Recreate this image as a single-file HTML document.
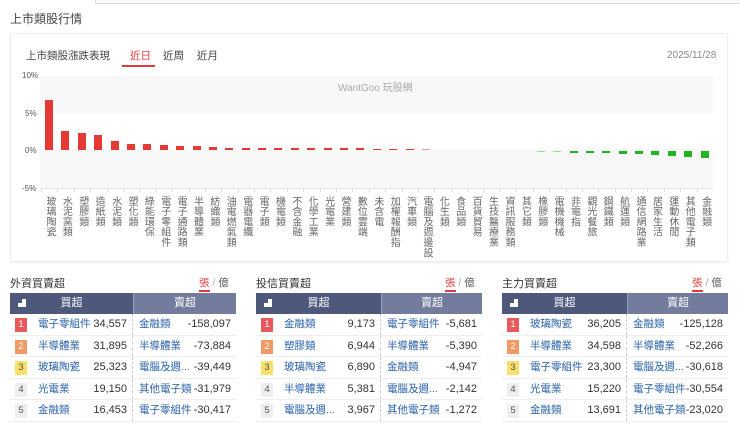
<!DOCTYPE html>
<html><head><meta charset="utf-8"><style>
*{margin:0;padding:0;box-sizing:border-box}
body{width:740px;height:425px;background:#fff;font-family:"Liberation Sans","Noto Sans CJK TC",sans-serif;color:#333;position:relative;overflow:hidden}
.a{position:absolute}
.cols{position:absolute;left:41px;top:0;display:flex}
.col{width:16.4px;position:relative;height:320px}
.bar{position:absolute;left:4px;width:8px}
.lbl{position:absolute;top:196px;left:2px;width:13px;writing-mode:vertical-rl;text-orientation:upright;font-size:10px;line-height:13px;color:#666;letter-spacing:0.3px;white-space:nowrap}
.tk{position:absolute;top:188px;left:0;width:1px;height:4px;background:#ddd}
.tbl{position:absolute;top:293px;width:226px}
.hd{height:21px;display:flex;color:#fff;font-size:11px}
.hd .l{background:#4e587b;width:123px;position:relative;text-align:center;line-height:21px}
.hd .r{background:#737c9c;flex:1;text-align:center;line-height:21px;border-left:1px solid #9aa2bc}
.row{height:21.6px;display:flex;font-size:10.5px;line-height:21.6px;border-bottom:1px solid #eee}
.row .l{width:123px;position:relative;border-right:1px dashed #ccc}
.row .r{flex:1;position:relative}
.bd{position:absolute;left:5px;top:4px;width:12px;height:14px;font-size:9.5px;line-height:14px;text-align:center;color:#fff}
.nm{position:absolute;color:#2a62a8;letter-spacing:0}
.l .nm{left:28px}.r .nm{left:6px}
.n{position:absolute;right:5px;color:#333;font-size:11px}
.ttl{position:absolute;top:275px;font-size:11px;color:#333}
.tog{position:absolute;top:275px;font-size:10.5px;color:#aaa}
.tog b{font-weight:normal;color:#e03c3c;border-bottom:2px solid #e03c3c;padding-bottom:1px}
</style></head><body>
<div class="a" style="left:95px;top:0;width:645px;height:4px;border-left:1px solid #ddd;border-bottom:1px solid #ddd;background:#fafafa"></div>
<div class="a" style="left:10px;top:10px;font-size:12px;color:#444">上市類股行情</div>
<div class="a" style="left:10px;top:33px;width:718px;height:229px;border:1px solid #eee;box-shadow:0 1px 2px #eee"></div>
<div class="a" style="left:26px;top:48px;font-size:10.5px;color:#444">上市類股漲跌表現</div>
<div class="a" style="left:130px;top:48px;font-size:10.5px;color:#e03c3c">近日</div>
<div class="a" style="left:122px;top:65px;width:33px;height:2px;background:#e03c3c"></div>
<div class="a" style="left:163px;top:48px;font-size:10.5px;color:#444">近周</div>
<div class="a" style="left:197px;top:48px;font-size:10.5px;color:#444">近月</div>
<div class="a" style="left:667px;top:50px;font-size:10px;color:#888">2025/11/28</div>
<div class="a" style="left:40px;top:76px;width:673px;height:37px;background:#f8f8f8"></div>
<div class="a" style="left:40px;top:150px;width:673px;height:38px;background:#f8f8f8"></div>
<div class="a" style="left:40px;top:188px;width:673px;height:1px;background:#e6e6e6"></div>
<div class="a" style="left:338px;top:79px;font-size:10px;color:#aaa">WantGoo 玩股網</div>
<div class="a" style="left:22px;top:71px;font-size:8px;color:#555">10%</div>
<div class="a" style="left:25px;top:109px;font-size:8px;color:#555">5%</div>
<div class="a" style="left:25px;top:146px;font-size:8px;color:#555">0%</div>
<div class="a" style="left:22px;top:184px;font-size:8px;color:#555">-5%</div>
<div class="cols">
<div class="col"><div class="bar" style="top:100px;height:50px;background:#e53935"></div><div class="tk"></div><div class="lbl">玻璃陶瓷</div></div>
<div class="col"><div class="bar" style="top:131px;height:19px;background:#e53935"></div><div class="tk"></div><div class="lbl">水泥窯類</div></div>
<div class="col"><div class="bar" style="top:133px;height:17px;background:#e53935"></div><div class="tk"></div><div class="lbl">塑膠類</div></div>
<div class="col"><div class="bar" style="top:135px;height:15px;background:#e53935"></div><div class="tk"></div><div class="lbl">造紙類</div></div>
<div class="col"><div class="bar" style="top:141px;height:9px;background:#e53935"></div><div class="tk"></div><div class="lbl">水泥類</div></div>
<div class="col"><div class="bar" style="top:144px;height:6px;background:#e53935"></div><div class="tk"></div><div class="lbl">塑化類</div></div>
<div class="col"><div class="bar" style="top:144px;height:6px;background:#e53935"></div><div class="tk"></div><div class="lbl">綠能環保</div></div>
<div class="col"><div class="bar" style="top:145px;height:5px;background:#e53935"></div><div class="tk"></div><div class="lbl">電子零組件</div></div>
<div class="col"><div class="bar" style="top:146px;height:4px;background:#e53935"></div><div class="tk"></div><div class="lbl">電子通路類</div></div>
<div class="col"><div class="bar" style="top:146px;height:4px;background:#e53935"></div><div class="tk"></div><div class="lbl">半導體業</div></div>
<div class="col"><div class="bar" style="top:147px;height:3px;background:#e53935"></div><div class="tk"></div><div class="lbl">紡織類</div></div>
<div class="col"><div class="bar" style="top:148px;height:2px;background:#e53935"></div><div class="tk"></div><div class="lbl">油電燃氣類</div></div>
<div class="col"><div class="bar" style="top:148px;height:2px;background:#e53935"></div><div class="tk"></div><div class="lbl">電器電纜</div></div>
<div class="col"><div class="bar" style="top:148px;height:2px;background:#e53935"></div><div class="tk"></div><div class="lbl">電子類</div></div>
<div class="col"><div class="bar" style="top:148px;height:2px;background:#e53935"></div><div class="tk"></div><div class="lbl">機電類</div></div>
<div class="col"><div class="bar" style="top:148px;height:2px;background:#e53935"></div><div class="tk"></div><div class="lbl">不含金融</div></div>
<div class="col"><div class="bar" style="top:148px;height:2px;background:#e53935"></div><div class="tk"></div><div class="lbl">化學工業</div></div>
<div class="col"><div class="bar" style="top:148px;height:2px;background:#e53935"></div><div class="tk"></div><div class="lbl">光電業</div></div>
<div class="col"><div class="bar" style="top:148px;height:2px;background:#e53935"></div><div class="tk"></div><div class="lbl">營建類</div></div>
<div class="col"><div class="bar" style="top:148px;height:2px;background:#e53935"></div><div class="tk"></div><div class="lbl">數位雲端</div></div>
<div class="col"><div class="bar" style="top:148.5px;height:1.5px;background:#e53935"></div><div class="tk"></div><div class="lbl">未含電</div></div>
<div class="col"><div class="bar" style="top:148.5px;height:1.5px;background:#e53935"></div><div class="tk"></div><div class="lbl">加權報酬指</div></div>
<div class="col"><div class="bar" style="top:149px;height:1px;background:#e53935"></div><div class="tk"></div><div class="lbl">汽車類</div></div>
<div class="col"><div class="bar" style="top:149px;height:1px;background:#f0a0a8"></div><div class="tk"></div><div class="lbl">電腦及週邊設</div></div>
<div class="col"><div class="tk"></div><div class="lbl">化生類</div></div>
<div class="col"><div class="tk"></div><div class="lbl">食品類</div></div>
<div class="col"><div class="tk"></div><div class="lbl">百貨貿易</div></div>
<div class="col"><div class="tk"></div><div class="lbl">生技醫療業</div></div>
<div class="col"><div class="tk"></div><div class="lbl">資訊服務類</div></div>
<div class="col"><div class="tk"></div><div class="lbl">其它類</div></div>
<div class="col"><div class="bar" style="top:151px;height:1px;background:#9ddc9d"></div><div class="tk"></div><div class="lbl">橡膠類</div></div>
<div class="col"><div class="bar" style="top:151px;height:1px;background:#9ddc9d"></div><div class="tk"></div><div class="lbl">電機機械</div></div>
<div class="col"><div class="bar" style="top:151px;height:1.5px;background:#22b522"></div><div class="tk"></div><div class="lbl">非電指</div></div>
<div class="col"><div class="bar" style="top:151px;height:2px;background:#22b522"></div><div class="tk"></div><div class="lbl">觀光餐旅</div></div>
<div class="col"><div class="bar" style="top:151px;height:2px;background:#22b522"></div><div class="tk"></div><div class="lbl">鋼鐵類</div></div>
<div class="col"><div class="bar" style="top:151px;height:2.5px;background:#22b522"></div><div class="tk"></div><div class="lbl">航運類</div></div>
<div class="col"><div class="bar" style="top:151px;height:3px;background:#22b522"></div><div class="tk"></div><div class="lbl">通信網路業</div></div>
<div class="col"><div class="bar" style="top:151px;height:3.5px;background:#22b522"></div><div class="tk"></div><div class="lbl">居家生活</div></div>
<div class="col"><div class="bar" style="top:151px;height:5px;background:#22b522"></div><div class="tk"></div><div class="lbl">運動休閒</div></div>
<div class="col"><div class="bar" style="top:151px;height:6px;background:#22b522"></div><div class="tk"></div><div class="lbl">其他電子類</div></div>
<div class="col"><div class="bar" style="top:151px;height:7px;background:#22b522"></div><div class="tk"></div><div class="lbl">金融類</div></div>
</div>

<div class="ttl" style="left:10px">外資買賣超</div>
<div class="tog" style="left:199px"><b>張</b> / <span style="color:#555">億</span></div>
<div class="tbl" style="left:10px">
<div class="hd"><div class="l"><span style="position:absolute;left:8px;font-size:8px">▟</span>買超</div><div class="r">賣超</div></div>
<div class="row"><div class="l"><div class="bd" style="background:#e9585a">1</div><span class="nm">電子零組件</span><span class="n">34,557</span></div><div class="r"><span class="nm">金融類</span><span class="n">-158,097</span></div></div>
<div class="row"><div class="l"><div class="bd" style="background:#f39a64">2</div><span class="nm">半導體業</span><span class="n">31,895</span></div><div class="r"><span class="nm">半導體業</span><span class="n">-73,884</span></div></div>
<div class="row"><div class="l"><div class="bd" style="background:#f9e06a;color:#555">3</div><span class="nm">玻璃陶瓷</span><span class="n">25,323</span></div><div class="r"><span class="nm">電腦及週...</span><span class="n">-39,449</span></div></div>
<div class="row"><div class="l"><div class="bd" style="background:#eee;color:#555">4</div><span class="nm">光電業</span><span class="n">19,150</span></div><div class="r"><span class="nm">其他電子類</span><span class="n">-31,979</span></div></div>
<div class="row"><div class="l"><div class="bd" style="background:#eee;color:#555">5</div><span class="nm">金融類</span><span class="n">16,453</span></div><div class="r"><span class="nm">電子零組件</span><span class="n">-30,417</span></div></div>
</div>

<div class="ttl" style="left:256px">投信買賣超</div>
<div class="tog" style="left:445px"><b>張</b> / <span style="color:#555">億</span></div>
<div class="tbl" style="left:256px">
<div class="hd"><div class="l" style="width:125px"><span style="position:absolute;left:8px;font-size:8px">▟</span>買超</div><div class="r">賣超</div></div>
<div class="row"><div class="l" style="width:125px"><div class="bd" style="background:#e9585a">1</div><span class="nm">金融類</span><span class="n">9,173</span></div><div class="r"><span class="nm">電子零組件</span><span class="n">-5,681</span></div></div>
<div class="row"><div class="l" style="width:125px"><div class="bd" style="background:#f39a64">2</div><span class="nm">塑膠類</span><span class="n">6,944</span></div><div class="r"><span class="nm">半導體業</span><span class="n">-5,390</span></div></div>
<div class="row"><div class="l" style="width:125px"><div class="bd" style="background:#f9e06a;color:#555">3</div><span class="nm">玻璃陶瓷</span><span class="n">6,890</span></div><div class="r"><span class="nm">金融類</span><span class="n">-4,947</span></div></div>
<div class="row"><div class="l" style="width:125px"><div class="bd" style="background:#eee;color:#555">4</div><span class="nm">半導體業</span><span class="n">5,381</span></div><div class="r"><span class="nm">電腦及週...</span><span class="n">-2,142</span></div></div>
<div class="row"><div class="l" style="width:125px"><div class="bd" style="background:#eee;color:#555">5</div><span class="nm">電腦及週...</span><span class="n">3,967</span></div><div class="r"><span class="nm">其他電子類</span><span class="n">-1,272</span></div></div>
</div>

<div class="ttl" style="left:502px">主力買賣超</div>
<div class="tog" style="left:692px"><b>張</b> / <span style="color:#555">億</span></div>
<div class="tbl" style="left:502px">
<div class="hd"><div class="l" style="width:125px"><span style="position:absolute;left:8px;font-size:8px">▟</span>買超</div><div class="r">賣超</div></div>
<div class="row"><div class="l" style="width:125px"><div class="bd" style="background:#e9585a">1</div><span class="nm">玻璃陶瓷</span><span class="n">36,205</span></div><div class="r"><span class="nm">金融類</span><span class="n">-125,128</span></div></div>
<div class="row"><div class="l" style="width:125px"><div class="bd" style="background:#f39a64">2</div><span class="nm">半導體業</span><span class="n">34,598</span></div><div class="r"><span class="nm">半導體業</span><span class="n">-52,266</span></div></div>
<div class="row"><div class="l" style="width:125px"><div class="bd" style="background:#f9e06a;color:#555">3</div><span class="nm">電子零組件</span><span class="n">23,300</span></div><div class="r"><span class="nm">電腦及週...</span><span class="n">-30,618</span></div></div>
<div class="row"><div class="l" style="width:125px"><div class="bd" style="background:#eee;color:#555">4</div><span class="nm">光電業</span><span class="n">15,220</span></div><div class="r"><span class="nm">電子零組件</span><span class="n">-30,554</span></div></div>
<div class="row"><div class="l" style="width:125px"><div class="bd" style="background:#eee;color:#555">5</div><span class="nm">金融類</span><span class="n">13,691</span></div><div class="r"><span class="nm">其他電子類</span><span class="n">-23,020</span></div></div>
</div>
</body></html>
